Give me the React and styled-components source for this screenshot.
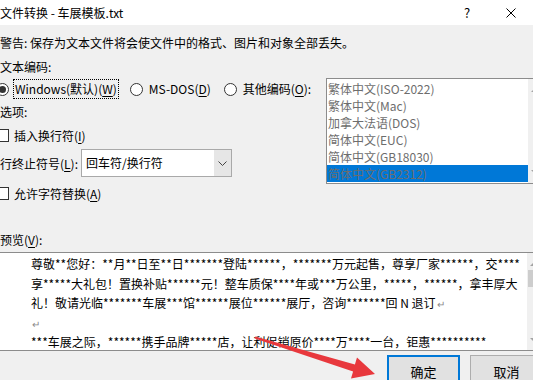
import React from 'react';
import styled, { createGlobalStyle } from 'styled-components';

const GlobalStyle = createGlobalStyle`
  html, body {
    margin: 0;
    padding: 0;
    background: #f0f0f0;
    overflow: hidden;
  }
`;

const Window = styled.div`
  position: relative;
  width: 533px;
  height: 380px;
  overflow: hidden;
  background: #f0f0f0;
  font-family: "Noto Sans CJK SC", "Noto Sans", sans-serif;
  font-size: 12px;
  color: #000;
`;

const TitleBar = styled.div`
  height: 25px;
  background: #fff;
  display: flex;
  align-items: center;
`;

const Title = styled.div`
  flex: 1;
  line-height: 25px;
  white-space: nowrap;
`;

const TitleButton = styled.div`
  width: 44px;
  height: 25px;
  display: flex;
  align-items: center;
  justify-content: center;
  font-size: 13px;
`;

const Line = styled.div`
  height: 16px;
  line-height: 16px;
  white-space: nowrap;
  margin-top: ${p => p.$top || 0}px;
`;

const Key = styled.span`
  text-decoration: underline;
  text-underline-offset: 2px;
`;

const Encoding = styled.div`
  display: flex;
  align-items: flex-start;
  margin-top: 3px;
`;

const LeftColumn = styled.div`
  width: 326px;
  flex: none;
  display: flex;
  flex-direction: column;
`;

const RadioRow = styled.div`
  height: 22px;
  display: flex;
  align-items: center;
  gap: 11px;
  margin-left: -4px;
`;

const RadioItem = styled.label`
  display: flex;
  align-items: center;
  gap: 4px;
`;

const RadioCircle = styled.span`
  width: 11px;
  height: 11px;
  border: 1px solid #333;
  border-radius: 50%;
  background: #fff;
  display: flex;
  align-items: center;
  justify-content: center;
  &::after {
    content: '';
    width: 7px;
    height: 7px;
    border-radius: 50%;
    background: ${p => (p.$checked ? '#333' : 'transparent')};
  }
`;

const RadioText = styled.span`
  padding: 1px 1px;
  line-height: 16px;
  border: 1px ${p => (p.$focused ? 'dotted #000' : 'solid transparent')};
  white-space: nowrap;
`;

const CheckRow = styled.label`
  height: 16px;
  display: flex;
  align-items: center;
  gap: 5px;
  margin-left: -4px;
  margin-top: ${p => p.$top}px;
  white-space: nowrap;
`;

const CheckBox = styled.span`
  width: 11px;
  height: 11px;
  border: 1px solid #333;
  background: #fff;
  flex: none;
`;

const ComboRow = styled.div`
  height: 28px;
  margin-top: 6px;
  display: flex;
  align-items: center;
  gap: 3px;
  white-space: nowrap;
`;

const Combo = styled.div`
  width: 149px;
  height: 26px;
  border: 1px solid #a9a9a9;
  background: #fff;
  display: flex;
`;

const ComboText = styled.div`
  flex: 1;
  padding-left: 4px;
  line-height: 26px;
`;

const ComboArrow = styled.div`
  width: 17px;
  background: #e6e6e6;
  display: flex;
  align-items: center;
  justify-content: center;
`;

const ListBox = styled.div`
  flex: none;
  width: 218px;
  height: 104px;
  border: 1px solid #8c8c8c;
  background: #fff;
  display: flex;
`;

const ListItems = styled.div`
  width: 201px;
  padding-top: 1px;
`;

const ListItem = styled.div`
  height: 17px;
  line-height: 17px;
  padding-left: 1px;
  color: #6d6d6d;
  white-space: nowrap;
  background: ${p => (p.$selected ? '#0078d7' : 'transparent')};
`;

const ScrollBar = styled.div`
  flex: 1;
  background: #f0f0f0;
  position: relative;
`;

const ScrollArrow = styled.div`
  position: absolute;
  left: 3px;
  top: ${p => p.$top}px;
  width: 0;
  height: 0;
  border-left: 4px solid transparent;
  border-right: 4px solid transparent;
  ${p => (p.$down ? 'border-top: 4px solid #a3a3a3;' : 'border-bottom: 4px solid #a3a3a3;')}
`;

const ScrollThumb = styled.div`
  position: absolute;
  left: 1px;
  right: 1px;
  top: ${p => p.$top}px;
  height: ${p => p.$height}px;
  background: #cdcdcd;
`;

const Preview = styled.div`
  margin-top: 4px;
  height: 97px;
  width: 550px;
  border-top: 1px solid #8c8c8c;
  border-bottom: 1px solid #8c8c8c;
  background: #fff;
  display: flex;
`;

const PreviewText = styled.div`
  width: 496px;
  padding: 1px 0 0 31px;
  overflow: hidden;
`;

const PreviewLine = styled.div`
  height: 19.5px;
  line-height: 19.5px;
  white-space: nowrap;
`;

const Mark = styled.span`
  color: #8a8a8a;
  font-size: 10px;
  margin-left: 1px;
`;

const ButtonRow = styled.div`
  display: flex;
  justify-content: flex-end;
  gap: 10px;
  margin-top: 4px;
  margin-right: -10px;
`;

const Button = styled.div`
  width: 73px;
  height: 32px;
  box-sizing: border-box;
  background: #e1e1e1;
  border: ${p => (p.$primary ? '2px solid #0078d7' : '1px solid #adadad')};
  display: flex;
  align-items: center;
  justify-content: center;
  font-size: 13px;
`;

const Overlay = styled.svg`
  position: absolute;
  left: 0;
  top: 0;
  pointer-events: none;
`;

const encodings = [
  '繁体中文(ISO-2022)',
  '繁体中文(Mac)',
  '加拿大法语(DOS)',
  '简体中文(EUC)',
  '简体中文(GB18030)',
  '简体中文(GB2312)',
];

const previewLines = [
  '尊敬**您好：**月**日至**日*******登陆******，*******万元起售，尊享厂家******，交****',
  '享*****大礼包！置换补贴******元！整车质保****年或***万公里，*****，******，拿丰厚大',
  '礼！敬请光临*******车展***馆******展位******展厅，咨询*******回 N 退订',
  '',
  '***车展之际，******携手品牌*****店，让利促销原价****万****一台，钜惠**********',
];

export default function App() {
  return (
    <>
      <GlobalStyle />
      <Window>
        <TitleBar>
          <Title>文件转换 - 车展模板.txt</Title>
          <TitleButton>?</TitleButton>
          <TitleButton>
            <svg width="10" height="10" viewBox="0 0 10 10">
              <path d="M0.5 0.5 L9.5 9.5 M9.5 0.5 L0.5 9.5" stroke="#000" strokeWidth="1" />
            </svg>
          </TitleButton>
        </TitleBar>

        <Line $top={10}>警告: 保存为文本文件将会使文件中的格式、图片和对象全部丢失。</Line>
        <Line $top={8}>文本编码:</Line>

        <Encoding>
          <LeftColumn>
            <RadioRow>
              <RadioItem>
                <RadioCircle $checked />
                <RadioText $focused>Windows(默认)(<Key>W</Key>)</RadioText>
              </RadioItem>
              <RadioItem>
                <RadioCircle />
                <RadioText>MS-DOS(<Key>D</Key>)</RadioText>
              </RadioItem>
              <RadioItem>
                <RadioCircle />
                <RadioText>其他编码(<Key>O</Key>):</RadioText>
              </RadioItem>
            </RadioRow>
            <Line $top={4}>选项:</Line>
            <CheckRow $top={7}>
              <CheckBox />
              <span>插入换行符(<Key>I</Key>)</span>
            </CheckRow>
            <ComboRow>
              <span>行终止符号(<Key>L</Key>):</span>
              <Combo>
                <ComboText>回车符/换行符</ComboText>
                <ComboArrow>
                  <svg width="9" height="5" viewBox="0 0 9 5">
                    <path d="M0.5 0.5 L4.5 4.5 L8.5 0.5" fill="none" stroke="#444" strokeWidth="1" />
                  </svg>
                </ComboArrow>
              </Combo>
            </ComboRow>
            <CheckRow $top={8}>
              <CheckBox />
              <span>允许字符替换(<Key>A</Key>)</span>
            </CheckRow>
          </LeftColumn>

          <ListBox>
            <ListItems>
              {encodings.map((e, i) => (
                <ListItem key={e} $selected={i === encodings.length - 1}>{e}</ListItem>
              ))}
            </ListItems>
            <ScrollBar>
              <ScrollArrow $top={9} />
              <ScrollArrow $top={91} $down />
            </ScrollBar>
          </ListBox>
        </Encoding>

        <Line $top={31}>预览(<Key>V</Key>):</Line>

        <Preview>
          <PreviewText>
            {previewLines.map((l, i) => (
              <PreviewLine key={i}>
                {l}
                {(i === 2 || i === 3) && <Mark>↵</Mark>}
              </PreviewLine>
            ))}
          </PreviewText>
          <ScrollBar>
            <ScrollArrow $top={9} />
            <ScrollThumb $top={17} $height={17} />
            <ScrollArrow $top={85} $down />
          </ScrollBar>
        </Preview>

        <ButtonRow>
          <Button $primary>确定</Button>
          <Button>取消</Button>
        </ButtonRow>

        <Overlay width="533" height="380" viewBox="0 0 533 380">
          <polygon
            points="255.3,336.5 354.9,364.6 357,357.4 375,374 351,378.6 353.1,371.4 254.7,338.5"
            fill="#e8383d"
          />
        </Overlay>
      </Window>
    </>
  );
}
